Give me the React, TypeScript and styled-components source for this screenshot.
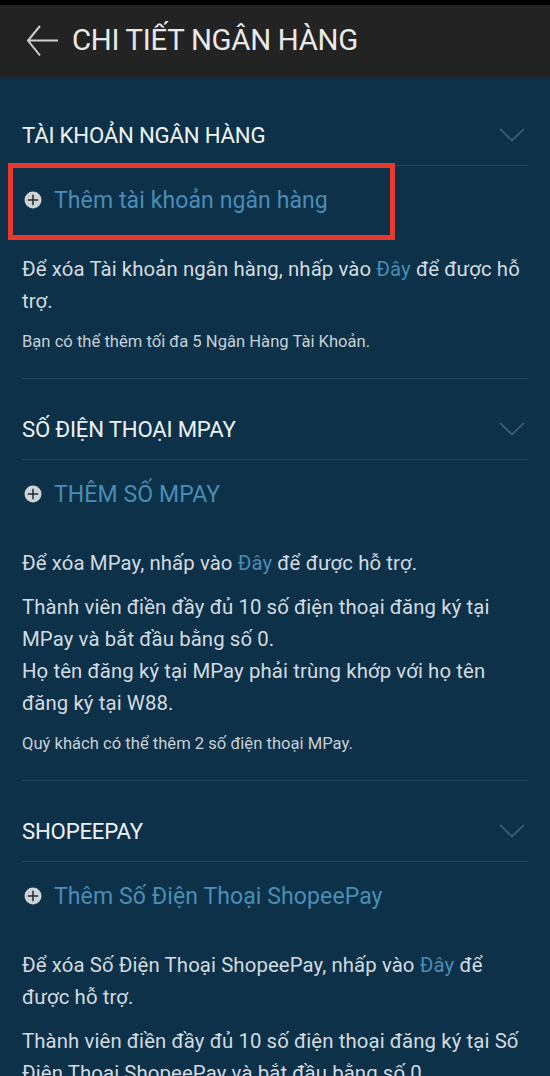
import styled, { createGlobalStyle } from "styled-components";

const GlobalStyle = createGlobalStyle`
  html, body {
    margin: 0;
    padding: 0;
    background: #0c3148;
  }
  body {
    font-family: Roboto, "Noto Sans", "Liberation Sans", sans-serif;
  }
`;

const Page = styled.div`
  width: 550px;
  height: 1076px;
  overflow: hidden;
  background: #0c3148;
`;

const TopBar = styled.header`
  height: 72px;
  border-top: 5px solid #000;
  background: #232323;
  display: flex;
  align-items: center;
  padding-left: 25px;
  gap: 13px;
  color: #e9e9e9;
`;

const Title = styled.h1`
  margin: 0;
  font-size: 29.4px;
  font-weight: 400;
  letter-spacing: -0.3px;
  line-height: 1;
`;

const Content = styled.main`
  padding: 8px 22px 0;
`;

const Section = styled.section<{ $last?: boolean }>`
  border-bottom: ${(p) => (p.$last ? "none" : "1px solid #24495d")};
`;

const SectionHead = styled.div`
  height: 81px;
  box-sizing: border-box;
  padding-top: 19px;
  display: flex;
  align-items: center;
  justify-content: space-between;
  border-bottom: 1px solid #24495d;
`;

const SectionTitle = styled.h2`
  margin: 0;
  font-size: 22.2px;
  font-weight: 400;
  color: #eef2f4;
  letter-spacing: -0.2px;
`;

const AddRow = styled.div`
  position: relative;
  height: 68px;
  display: flex;
  align-items: center;
  gap: 12px;
  padding-left: 2px;
`;

const AddLabel = styled.span`
  font-size: 23px;
  color: #4a8db6;
  letter-spacing: 0.1px;
`;

const Highlight = styled.div`
  position: absolute;
  left: -14px;
  top: -3px;
  width: 387px;
  height: 77px;
  box-sizing: border-box;
  border: 5px solid #e8392f;
  pointer-events: none;
`;

const Text = styled.p`
  margin: 12px 0 0;
  font-size: 20.35px;
  line-height: 32px;
  color: #d4dbe0;
  letter-spacing: 0.1px;
  white-space: nowrap;

  &:first-of-type {
    margin-top: 19px;
  }
`;

const Line = styled.span`
  display: block;
`;

const Link = styled.a`
  color: #4a8db6;
  text-decoration: none;
`;

const Note = styled.p`
  margin: 13px 0 0;
  padding-bottom: 24px;
  font-size: 16.6px;
  line-height: 24px;
  color: #c8d0d6;
`;

const BackArrow = () => (
  <svg width="34" height="34" viewBox="0 0 34 34" fill="none">
    <path d="M33 16.5H3M15 2L3 16.5L15 31.5" stroke="#cfcfcf" strokeWidth="2" />
  </svg>
);

const Chevron = () => (
  <svg width="26" height="14" viewBox="0 0 26 14" fill="none" style={{ marginRight: 3 }}>
    <path d="M1 1L13 12.5L25 1" stroke="#3d6881" strokeWidth="1.6" />
  </svg>
);

const PlusCircle = () => (
  <svg width="18" height="18" viewBox="0 0 18 18">
    <circle cx="9" cy="9" r="8.5" fill="#cfd3d6" />
    <path d="M9 3.8V14.2M3.8 9H14.2" stroke="#1c2a33" strokeWidth="1.5" />
  </svg>
);

// "[Đây]" marks the help link inside a line
const renderLine = (line: string, key: number) => {
  const parts = line.split("[Đây]");
  return (
    <Line key={key}>
      {parts.map((p, i) => (
        <span key={i}>
          {p}
          {i < parts.length - 1 && <Link>Đây</Link>}
        </span>
      ))}
    </Line>
  );
};

const sections = [
  {
    title: "TÀI KHOẢN NGÂN HÀNG",
    add: "Thêm tài khoản ngân hàng",
    highlight: true,
    paragraphs: [["Để xóa Tài khoản ngân hàng, nhấp vào [Đây] để được hỗ", "trợ."]],
    note: "Bạn có thể thêm tối đa 5 Ngân Hàng Tài Khoản.",
  },
  {
    title: "SỐ ĐIỆN THOẠI MPAY",
    add: "THÊM SỐ MPAY",
    highlight: false,
    paragraphs: [
      ["Để xóa MPay, nhấp vào [Đây] để được hỗ trợ."],
      [
        "Thành viên điền đầy đủ 10 số điện thoại đăng ký tại",
        "MPay và bắt đầu bằng số 0.",
        "Họ tên đăng ký tại MPay phải trùng khớp với họ tên",
        "đăng ký tại W88.",
      ],
    ],
    note: "Quý khách có thể thêm 2 số điện thoại MPay.",
  },
  {
    title: "SHOPEEPAY",
    add: "Thêm Số Điện Thoại ShopeePay",
    highlight: false,
    paragraphs: [
      ["Để xóa Số Điện Thoại ShopeePay, nhấp vào [Đây] để", "được hỗ trợ."],
      [
        "Thành viên điền đầy đủ 10 số điện thoại đăng ký tại Số",
        "Điện Thoại ShopeePay và bắt đầu bằng số 0.",
        "Họ tên đăng ký tại ShopeePay phải trùng khớp với họ",
        "tên đăng ký tại W88.",
      ],
    ],
    note: "Quý khách có thể thêm 2 số điện thoại ShopeePay.",
  },
];

export default function App() {
  return (
    <Page>
      <GlobalStyle />
      <TopBar>
        <BackArrow />
        <Title>CHI TIẾT NGÂN HÀNG</Title>
      </TopBar>
      <Content>
        {sections.map((s, i) => (
          <Section key={s.title} $last={i === sections.length - 1}>
            <SectionHead>
              <SectionTitle>{s.title}</SectionTitle>
              <Chevron />
            </SectionHead>
            <AddRow>
              <PlusCircle />
              <AddLabel>{s.add}</AddLabel>
              {s.highlight && <Highlight />}
            </AddRow>
            {s.paragraphs.map((lines, j) => (
              <Text key={j}>{lines.map(renderLine)}</Text>
            ))}
            <Note>{s.note}</Note>
          </Section>
        ))}
      </Content>
    </Page>
  );
}
